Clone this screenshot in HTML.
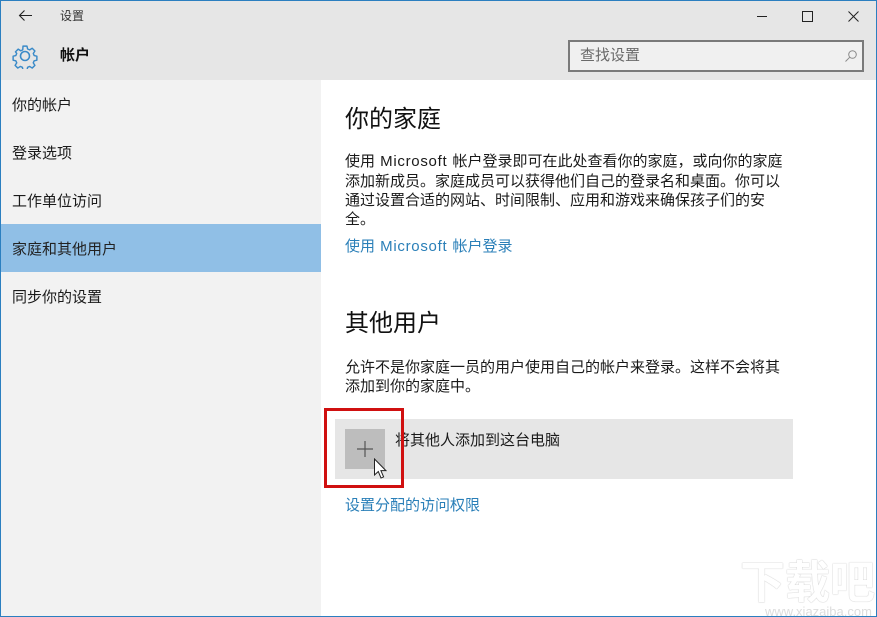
<!DOCTYPE html>
<html lang="zh-CN"><head><meta charset="utf-8"><title>设置</title>
<style>
html,body{margin:0;padding:0;background:#fff}
#w{position:relative;width:877px;height:617px;overflow:hidden;background:#fff;font-family:"Liberation Sans","Noto Sans CJK SC",sans-serif;color:#1a1a1a}
.a{position:absolute;white-space:nowrap}
.t{font-size:15px;line-height:20px}
.l{color:#2a7fb8}
.h{font-size:24px;line-height:32px;color:#111}
.m{letter-spacing:.7px;margin:0 1px}
</style></head><body><div id="w">
<div class="a" style="left:0;top:0;width:877px;height:80px;background:#e6e6e6"></div>
<div class="a" style="left:0;top:80px;width:321px;height:537px;background:#f2f2f2"></div>
<div class="a" style="left:0;top:224px;width:321px;height:48px;background:#90bfe6"></div>

<svg class="a" style="left:18px;top:9px" width="14" height="13" viewBox="0 0 14 13"><path d="M1.500 6.500H14M6.500 1.500L1.500 6.500l5 5" fill="none" stroke="#222" stroke-width="1.100"/></svg>
<div class="a" style="left:60px;top:8px;font-size:12px;line-height:17px;color:#333">设置</div>
<svg class="a" style="left:12px;top:43px" width="26" height="26" viewBox="0 0 26 26" fill="none" stroke="#3a8ac8" stroke-width="1.600" stroke-linejoin="round"><circle cx="13" cy="13" r="4.500"/><path d="M10.800 2h4.400l.7 3.200 2.300 1 2.800-1.800 3 3-1.800 2.800 1 2.300 3 .7v4.400l-3 .7-1 2.300 1.800 2.800-3 3-2.800-1.800-2.300 1-.7 3.200h-4.400l-.7-3.200-2.300-1-2.800 1.800-3-3 1.800-2.800-1-2.300-3-.7v-4.400l3-.7 1-2.300L2.400 8.400l3-3 2.800 1.800 2.300-1z" transform="translate(1.300 1.300) scale(.9)"/></svg>
<div class="a" style="left:60px;top:46px;font-size:15px;line-height:20px;font-weight:bold;color:#111">帐户</div>

<div class="a" style="left:757px;top:16px;width:10px;height:1px;background:#222"></div>
<div class="a" style="left:802px;top:11px;width:9px;height:9px;border:1px solid #222"></div>
<svg class="a" style="left:848px;top:11px" width="11" height="11" viewBox="0 0 11 11"><path d="M.5.500l10 10M10.500.500l-10 10" stroke="#222" fill="none"/></svg>

<div class="a" style="left:568px;top:40px;width:292px;height:28px;border:2px solid #7a7a7a;background:#f0f0f0"></div>
<div class="a" style="left:580px;top:46px;font-size:15px;line-height:20px;color:#6a6a6a">查找设置</div>
<svg class="a" style="left:845px;top:50px" width="12" height="12" viewBox="0 0 12 12" fill="none" stroke="#8a8a8a"><circle cx="7.500" cy="4.500" r="3.800"/><path d="M4.800 7.200L.5 11.500"/></svg>

<div class="a t" style="left:12px;top:96px">你的帐户</div>
<div class="a t" style="left:12px;top:144px">登录选项</div>
<div class="a t" style="left:12px;top:192px">工作单位访问</div>
<div class="a t" style="left:12px;top:240px;color:#222">家庭和其他用户</div>
<div class="a t" style="left:12px;top:288px">同步你的设置</div>

<div class="a h" style="left:345px;top:104px">你的家庭</div>
<div class="a t" style="left:345px;top:152px">使用 <span class="m">Microsoft</span> 帐户登录即可在此处查看你的家庭，或向你的家庭</div>
<div class="a t" style="left:345px;top:172px">添加新成员。家庭成员可以获得他们自己的登录名和桌面。你可以</div>
<div class="a t" style="left:345px;top:191px">通过设置合适的网站、时间限制、应用和游戏来确保孩子们的安</div>
<div class="a t" style="left:345px;top:210px">全。</div>
<div class="a t l" style="left:345px;top:237px">使用 <span class="m">Microsoft</span> 帐户登录</div>

<div class="a h" style="left:345px;top:308px">其他用户</div>
<div class="a t" style="left:345px;top:358px">允许不是你家庭一员的用户使用自己的帐户来登录。这样不会将其</div>
<div class="a t" style="left:345px;top:377px">添加到你的家庭中。</div>

<div class="a" style="left:335px;top:419px;width:458px;height:60px;background:#e6e6e6"></div>
<div class="a" style="left:345px;top:429px;width:40px;height:40px;background:#bdbdbd"></div>
<svg class="a" style="left:357px;top:441px" width="16" height="16" viewBox="0 0 16 16"><path d="M8 0V16M0 8H16" stroke="#555" stroke-width="1.200"/></svg>
<div class="a t" style="left:395px;top:431px">将其他人添加到这台电脑</div>
<div class="a" style="left:324px;top:408px;width:74px;height:74px;border:3px solid #d01010"></div>
<svg class="a" style="left:373px;top:458px" width="14" height="22" viewBox="0 0 14 22"><path d="M1.500 1V17l3.800-3.500 2.700 6.500 2.600-1.100-2.700-6.300h5z" fill="#fff" stroke="#222"/></svg>
<div class="a t l" style="left:345px;top:496px">设置分配的访问权限</div>

<div class="a" style="left:740px;top:560px;font-size:45px;line-height:46px;font-weight:bold;color:#fff;text-shadow:0 0 1px #c4c4c4,0 0 1px #c4c4c4">下载吧</div>
<div class="a" style="left:765px;top:605px;font-size:13px;line-height:13px;color:#ddd">www.xiazaiba.com</div>

<div class="a" style="left:0;top:0;width:877px;height:1px;background:#2b7fc0"></div>
<div class="a" style="left:0;top:616px;width:877px;height:1px;background:#2b7fc0"></div>
<div class="a" style="left:0;top:0;width:1px;height:617px;background:#2b7fc0"></div>
<div class="a" style="left:876px;top:0;width:1px;height:617px;background:#2b7fc0"></div>
</div></body></html>
